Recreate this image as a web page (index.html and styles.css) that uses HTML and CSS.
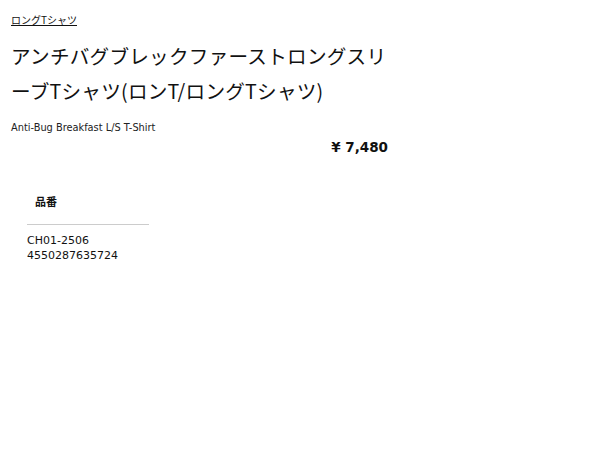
FILE: index.html
```html
<!DOCTYPE html>
<html lang="ja">
<head>
<meta charset="utf-8">
<link rel="stylesheet" href="styles.css">
</head>
<body>
<div class="page">
  <nav class="crumb"><a href="#">ロングTシャツ</a></nav>
  <h1 class="title">アンチバグブレックファーストロングスリーブTシャツ(ロンT/ロングTシャツ)</h1>
  <p class="sub">Anti-Bug Breakfast L/S T-Shirt</p>
  <p class="price">¥ 7,480</p>
  <div class="spec">
    <div class="spec-head">品番</div>
    <div class="spec-body">CH01-2506<br>4550287635724</div>
  </div>
</div>
</body>
</html>
```
FILE: styles.css
```css
html, body { margin: 0; padding: 0; background: #fff; }
body { font-family: "DejaVu Sans", "Noto Sans CJK JP", sans-serif; color: #111; }
.page { width: 377px; padding: 12px 0 0 11px; }
.crumb { font-size: 10px; line-height: 16px; }
.crumb a { color: #111; text-decoration: underline; font-family: "Noto Sans CJK JP", sans-serif; }
.title { margin: 9px -4px 0 0; font-family: "Noto Sans CJK JP", sans-serif; font-weight: 400; font-size: 19.6px; line-height: 35px; letter-spacing: 0.25px; }
.sub { margin: 13px 0 0; font-size: 9.8px; line-height: 14px; color: #222; }
.price { margin: 3px 0 0; text-align: right; font-weight: 700; font-size: 13.5px; line-height: 18px; }
.spec { width: 122px; margin: 37px 0 0 16px; }
.spec-head { font-family: "Noto Sans CJK JP", sans-serif; font-weight: 700; font-size: 11px; line-height: 16px; padding: 0 0 15px 8px; border-bottom: 1px solid #ccc; }
.spec-body { font-size: 11px; line-height: 15px; padding-top: 8px; }
```
